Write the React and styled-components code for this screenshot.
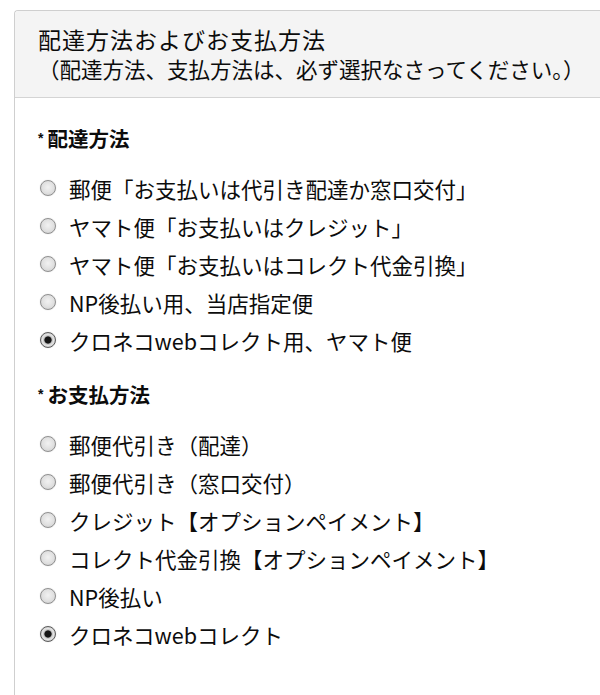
import React from 'react';
import styled, { createGlobalStyle } from 'styled-components';

const GlobalStyle = createGlobalStyle`
    html, body {
        margin: 0;
        padding: 0;
        background: #ffffff;
    }
    body {
        font-family: "Noto Sans CJK JP", "Noto Sans", sans-serif;
        color: #0c0c0c;
    }
`;

const Page = styled("div")`
    padding: 10px 0 0 14px;
    height: 685px;
    overflow: hidden;
`;

const Panel = styled("section")`
    width: 620px;
    height: 700px;
    border: 1px solid #cfcfcf;
    border-right: none;
    border-bottom: none;
    border-radius: 4px 0 0 0;
    background: #ffffff;
`;

const PanelHeader = styled("header")`
    background: #f4f4f4;
    border-bottom: 1px solid #d4d4d4;
    border-radius: 4px 0 0 0;
    padding: 13px 23px 14px;
`;

const Title = styled("h2")`
    margin: 0;
    font-size: 23px;
    line-height: 30px;
    font-weight: normal;
    letter-spacing: 1px;
`;

const Note = styled("p")`
    margin: 0;
    font-size: 21.5px;
    line-height: 29px;
    font-weight: normal;
`;

const PanelBody = styled("div")`
    padding: 25px 23px 0;
`;

const Group = styled("fieldset")`
    border: none;
    margin: 0 0 20px;
    padding: 0;
`;

const Legend = styled("h3")`
    margin: 0 0 12px;
    font-size: 20.5px;
    line-height: 30px;
    font-weight: bold;
    display: flex;
    align-items: baseline;
    gap: 4px;
`;

const Star = styled("span")`
    font-family: "Liberation Sans", sans-serif;
    font-size: 14px;
    font-weight: bold;
    position: relative;
    top: -4px;
`;

const Option = styled("label")`
    display: flex;
    align-items: center;
    height: 38px;
    gap: 13px;
    padding-left: 2px;
    font-size: 21.5px;
    cursor: pointer;
`;

const Radio = styled("span")`
    flex: none;
    width: 16px;
    height: 16px;
    box-sizing: border-box;
    border-radius: 50%;
    border: 1px solid ${(props) => (props.$checked ? "#5a5a5a" : "#8f8f8f")};
    background: ${(props) =>
        props.$checked
            ? "radial-gradient(circle, #151515 0, #151515 3.2px, #bdbdbd 4px, #e4e4e4 5.5px, #cfcfcf 7px)"
            : "radial-gradient(circle at 50% 45%, #f2f2f2 0, #e0e0e0 55%, #c8c8c8 100%)"};
    box-shadow: 0 0 1px rgba(0, 0, 0, 0.25);
`;

const shippingOptions = [
    "郵便「お支払いは代引き配達か窓口交付」",
    "ヤマト便「お支払いはクレジット」",
    "ヤマト便「お支払いはコレクト代金引換」",
    "NP後払い用、当店指定便",
    "クロネコwebコレクト用、ヤマト便",
];

const paymentOptions = [
    "郵便代引き（配達）",
    "郵便代引き（窓口交付）",
    "クレジット【オプションペイメント】",
    "コレクト代金引換【オプションペイメント】",
    "NP後払い",
    "クロネコwebコレクト",
];

function RadioGroup(props) {
    return (
        <Group>
            <Legend><Star>*</Star>{props.title}</Legend>
            {props.options.map((option, index) => (
                <Option key={index} onClick={() => props.onSelect(index)}>
                    <Radio $checked={props.selected === index} />
                    {option}
                </Option>
            ))}
        </Group>
    );
}

function App() {
    const [shipping, setShipping] = React.useState(4);
    const [payment, setPayment] = React.useState(5);

    return (
        <Page>
            <GlobalStyle />
            <Panel>
                <PanelHeader>
                    <Title>配達方法およびお支払方法</Title>
                    <Note>（配達方法、支払方法は、必ず選択なさってください。）</Note>
                </PanelHeader>
                <PanelBody>
                    <RadioGroup title="配達方法" options={shippingOptions} selected={shipping} onSelect={setShipping} />
                    <RadioGroup title="お支払方法" options={paymentOptions} selected={payment} onSelect={setPayment} />
                </PanelBody>
            </Panel>
        </Page>
    );
}

export default App;
